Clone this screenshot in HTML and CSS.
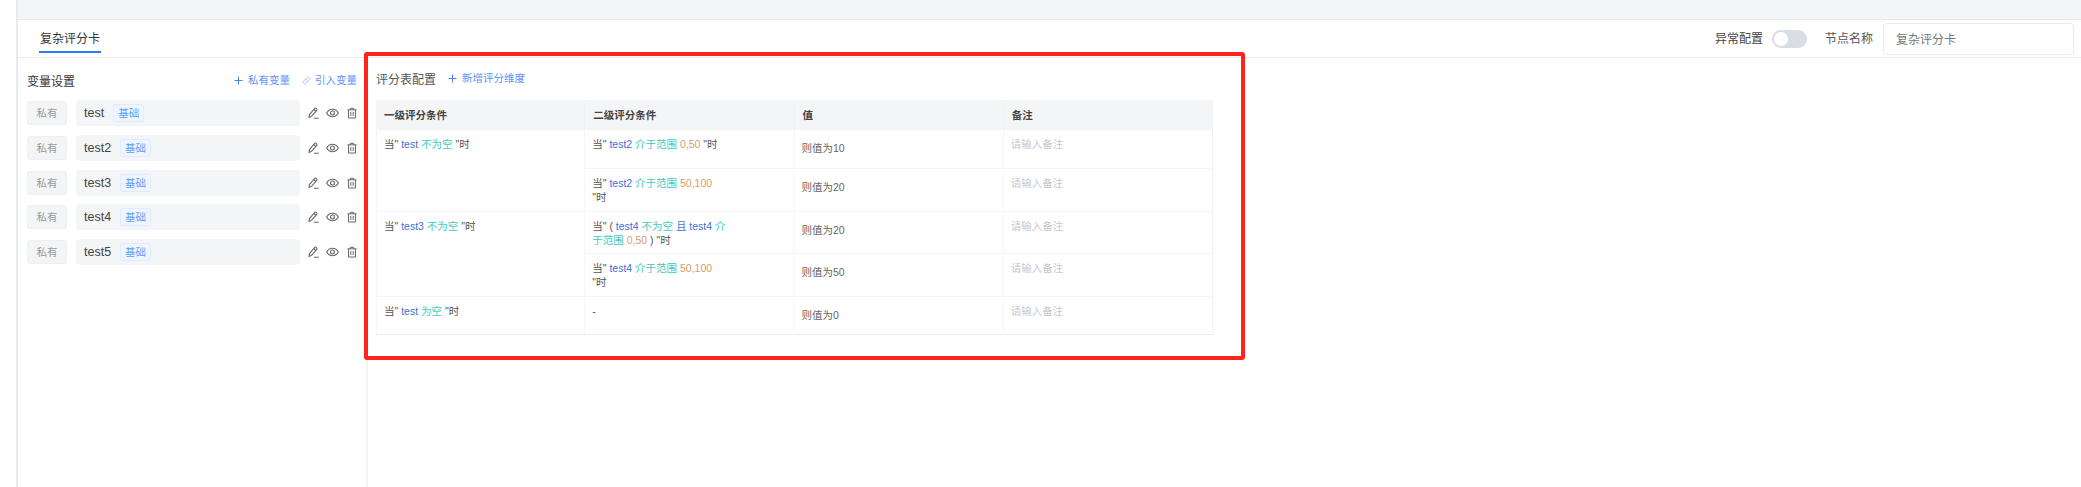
FILE: index.html
```html
<!DOCTYPE html>
<html lang="zh-CN">
<head>
<meta charset="utf-8">
<title>复杂评分卡</title>
<link rel="stylesheet" href="styles.css">
</head>
<body>
<svg class="defs" width="0" height="0" aria-hidden="true">
  <symbol id="i-pencil" viewBox="0 0 12 13"><path d="M1.600 8.200 7.200 1.600a1.100 1.100 0 0 1 1.600-.1l.6.5a1.100 1.100 0 0 1 .1 1.600L3.900 10.200l-2.700 1z" fill="none" stroke="currentColor" stroke-width="1.200"/><path d="M6.300 2.700 8.500 4.700M6.500 12.200h5.300" fill="none" stroke="currentColor" stroke-width="1.200"/></symbol>
  <symbol id="i-eye" viewBox="0 0 14 10"><path d="M.7 5C2.200 2.300 4.400 1 7 1s4.800 1.300 6.300 4C11.800 7.700 9.600 9 7 9S2.200 7.700.7 5z" fill="none" stroke="currentColor" stroke-width="1.200"/><circle cx="7" cy="5" r="2.100" fill="none" stroke="currentColor" stroke-width="1.200"/></symbol>
  <symbol id="i-trash" viewBox="0 0 11 12"><path d="M.5 2.500h10M3.800 2.500V.8h3.400v1.700M1.700 2.500v9h7.600v-9M4.200 4.800v4.400M6.800 4.800v4.400" fill="none" stroke="currentColor" stroke-width="1.100"/></symbol>
  <symbol id="i-plus" viewBox="0 0 9 9"><path d="M4.500.5v8M.5 4.500h8" fill="none" stroke="currentColor" stroke-width="1"/></symbol>
  <symbol id="i-link" viewBox="0 0 10 10"><path d="M4.200 5.800a1.800 1.800 0 0 0 2.600 0l1.600-1.600a1.900 1.900 0 0 0-2.600-2.600l-.8.8M5.800 4.200a1.800 1.800 0 0 0-2.600 0L1.600 5.800a1.900 1.900 0 0 0 2.600 2.600l.8-.8" fill="none" stroke="currentColor" stroke-width="1"/></symbol>
</svg>
<div class="app">
  <div class="band"></div>
  <header class="bar">
    <div class="tab">复杂评分卡</div>
    <div class="bar-right">
      <span class="bar-label">异常配置</span>
      <span class="switch"><span class="knob"></span></span>
      <span class="bar-label muted">节点名称</span>
      <input class="name-input" value="复杂评分卡">
    </div>
  </header>
  <div class="content">
    <aside class="side">
      <div class="side-head">
        <span class="side-title">变量设置</span>
        <div class="side-actions">
          <a class="act"><svg class="ic-plus"><use href="#i-plus"/></svg>私有变量</a>
          <a class="act"><svg class="ic-link"><use href="#i-link"/></svg>引入变量</a>
        </div>
      </div>
      <div class="var-row">
        <span class="scope">私有</span>
        <div class="var-box"><span class="var-name">test</span><span class="badge">基础</span></div>
        <div class="var-icons"><svg class="ic-pencil"><use href="#i-pencil"/></svg><svg class="ic-eye"><use href="#i-eye"/></svg><svg class="ic-trash"><use href="#i-trash"/></svg></div>
      </div>
      <div class="var-row">
        <span class="scope">私有</span>
        <div class="var-box"><span class="var-name">test2</span><span class="badge">基础</span></div>
        <div class="var-icons"><svg class="ic-pencil"><use href="#i-pencil"/></svg><svg class="ic-eye"><use href="#i-eye"/></svg><svg class="ic-trash"><use href="#i-trash"/></svg></div>
      </div>
      <div class="var-row">
        <span class="scope">私有</span>
        <div class="var-box"><span class="var-name">test3</span><span class="badge">基础</span></div>
        <div class="var-icons"><svg class="ic-pencil"><use href="#i-pencil"/></svg><svg class="ic-eye"><use href="#i-eye"/></svg><svg class="ic-trash"><use href="#i-trash"/></svg></div>
      </div>
      <div class="var-row">
        <span class="scope">私有</span>
        <div class="var-box"><span class="var-name">test4</span><span class="badge">基础</span></div>
        <div class="var-icons"><svg class="ic-pencil"><use href="#i-pencil"/></svg><svg class="ic-eye"><use href="#i-eye"/></svg><svg class="ic-trash"><use href="#i-trash"/></svg></div>
      </div>
      <div class="var-row">
        <span class="scope">私有</span>
        <div class="var-box"><span class="var-name">test5</span><span class="badge">基础</span></div>
        <div class="var-icons"><svg class="ic-pencil"><use href="#i-pencil"/></svg><svg class="ic-eye"><use href="#i-eye"/></svg><svg class="ic-trash"><use href="#i-trash"/></svg></div>
      </div>
    </aside>
    <main class="main">
      <div class="main-head">
        <span class="main-title">评分表配置</span>
        <a class="act"><svg class="ic-plus"><use href="#i-plus"/></svg>新增评分维度</a>
      </div>
      <table class="score">
        <thead>
          <tr><th>一级评分条件</th><th>二级评分条件</th><th>值</th><th>备注</th></tr>
        </thead>
        <tbody>
          <tr class="h-39">
            <td class="c1" rowspan="2">当" <b>test</b> <i>不为空</i> "时</td>
            <td class="c2">当" <b>test2</b> <i>介于范围</i> <em>0,50</em> "时</td>
            <td class="val">则值为10</td>
            <td class="note">请输入备注</td>
          </tr>
          <tr class="h-43">
            <td class="c2">当" <b>test2</b> <i>介于范围</i> <em>50,100</em> "时</td>
            <td class="val">则值为20</td>
            <td class="note">请输入备注</td>
          </tr>
          <tr class="h-42">
            <td class="c1" rowspan="2">当" <b>test3</b> <i>不为空</i> "时</td>
            <td class="c2">当" ( <b>test4</b> <i>不为空</i> <b>且</b> <b>test4</b> <i>介于范围</i> <em>0,50</em> ) "时</td>
            <td class="val">则值为20</td>
            <td class="note">请输入备注</td>
          </tr>
          <tr class="h-43">
            <td class="c2">当" <b>test4</b> <i>介于范围</i> <em>50,100</em> "时</td>
            <td class="val">则值为50</td>
            <td class="note">请输入备注</td>
          </tr>
          <tr class="h-39 last">
            <td class="c1">当" <b>test</b> <i>为空</i> "时</td>
            <td class="c2">-</td>
            <td class="val">则值为0</td>
            <td class="note">请输入备注</td>
          </tr>
        </tbody>
      </table>
      <div class="red-mark"></div>
    </main>
  </div>
</div>
</body>
</html>
```
FILE: styles.css
```css
* { box-sizing: border-box; }
html, body { margin: 0; height: 100%; background: #fff; overflow: hidden; }
body { font-family: "Liberation Sans", "Noto Sans CJK SC", sans-serif; font-size: 12px; color: #444; }
.defs { position: absolute; }
.app { margin-left: 16px; height: 100%; border-left: 2px solid #e7ebf0; display: flex; flex-direction: column; }
.band { height: 20px; flex: none; background: #f3f6f9; border-bottom: 1px solid #e6e9ed; }
.bar { height: 38px; flex: none; border-bottom: 1px solid #e8eaed; display: flex; justify-content: space-between; align-items: center; padding: 0 7px 0 21px; }
.tab { height: 33px; padding: 11px 1px 0; line-height: 16px; color: #333; border-bottom: 2px solid #2b7cf6; align-self: flex-start; }
.bar-right { display: flex; align-items: center; }
.bar-label { color: #444; line-height: 16px; width: 49px; white-space: nowrap; }
.bar-label.muted { color: #555; margin-right: 9px; }
.switch { width: 35px; height: 18px; border-radius: 9px; background: #d9dde4; padding: 2px; margin: 0 18px 0 8px; }
.knob { display: block; width: 14px; height: 14px; border-radius: 50%; background: #fff; }
.name-input { width: 191px; height: 32px; border: 1px solid #e8ebef; border-radius: 4px; padding: 0 12px; font: inherit; color: #777; background: #fff; outline: none; }
.content { flex: 1; display: flex; min-height: 0; }
.side { width: 350px; flex: none; border-right: 2px solid #f2f4f6; padding: 12px 9px 0; }
.side-head { height: 20px; display: flex; justify-content: space-between; align-items: center; margin-bottom: 10px; }
.side-title { color: #333; }
.side-actions { display: flex; gap: 12px; }
.act { display: inline-flex; align-items: center; font-size: 10.5px; color: #5f90f8; line-height: 14px; white-space: nowrap; }
.ic-plus { width: 9px; height: 9px; margin-right: 5px; color: #4d80f5; }
.ic-link { width: 9px; height: 9px; margin-right: 4px; color: #a9bdf3; }
.var-row { height: 26px; margin-bottom: 8.800px; display: flex; align-items: center; }
.scope { width: 40px; height: 24px; flex: none; background: #f3f4f5; border: 1px solid #eeeff1; border-radius: 3px; color: #9a9a9a; font-size: 10.5px; line-height: 22px; text-align: center; }
.var-box { width: 224px; height: 26px; flex: none; margin-left: 9px; padding-left: 8px; background: #f4f5f7; border-radius: 4px; display: flex; align-items: center; }
.var-name { color: #444; font-size: 12.5px; margin-right: 9px; }
.badge { width: 31px; height: 18px; background: #eef5ff; border: 1px solid #dfebff; border-radius: 3px; color: #5f9ff9; font-size: 10.5px; line-height: 16px; text-align: center; }
.var-icons { display: flex; align-items: center; margin-left: 8px; color: #666; }
.ic-pencil { width: 11px; height: 12px; margin-right: 7px; }
.ic-eye { width: 13px; height: 10px; margin-right: 8px; }
.ic-trash { width: 10px; height: 12px; }
.main { flex: 1; position: relative; padding: 12px 8px 0; }
.main-head { height: 16px; display: flex; align-items: center; margin-bottom: 14px; }
.main-title { color: #555; margin-right: 12px; width: 60px; white-space: nowrap; }
.score { width: 837px; table-layout: fixed; border-collapse: separate; border-spacing: 0; font-size: 10.5px; line-height: 14px; color: #555; }
.score th { height: 29px; background: #f4f5f7; text-align: left; font-weight: 700; color: #444; padding: 0 8px; border-right: 1px solid #f0f1f3; }
.score td { vertical-align: top; padding: 7px 7px 0; border-top: 1px solid #f2f3f5; border-right: 1px solid #f5f6f7; }
.score th:last-child, .score td:last-child { border-right: 1px solid #f2f3f5; }
.score .c1 { border-left: 1px solid #f5f6f7; }
.score .c2 { padding-right: 66px; }
.score b { font-weight: 400; color: #3f6fd6; }
.score i { font-style: normal; color: #42c9c1; }
.score em { font-style: normal; color: #d69c69; }
.score .val { padding-top: 11px; color: #666; }
.score .note { color: #c6c8cc; }
.h-39 { height: 39px; }
.h-42 { height: 42px; }
.h-43 { height: 43px; }
.last td { border-bottom: 1px solid #e8eaed; }
.red-mark { position: absolute; left: -4px; top: -6px; width: 881px; height: 308px; border: 4px solid #ff2419; border-radius: 3px; pointer-events: none; }
```
